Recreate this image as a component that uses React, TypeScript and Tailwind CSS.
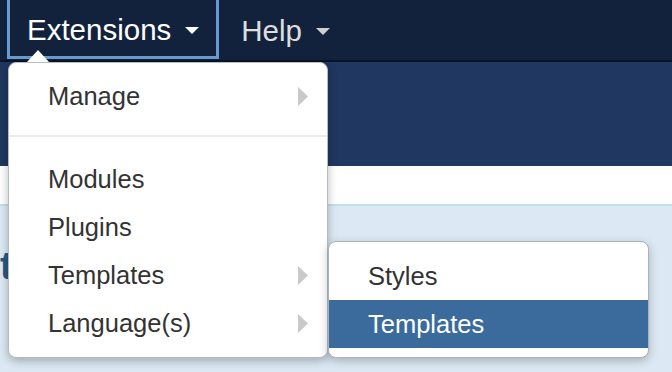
import React from "react";

const Arrow = () => (
  <svg width="10" height="19" viewBox="0 0 10 19" className="block">
    <polygon points="0,0 10,9.5 0,19" fill="#c9c9c9" />
  </svg>
);

const Caret = ({ color }: { color: string }) => (
  <svg width="14" height="7" viewBox="0 0 14 7" className="block">
    <polygon points="0,0 14,0 7,7" fill={color} />
  </svg>
);

function Item({ label, arrow, active }: { label: string; arrow?: boolean; active?: boolean }) {
  return (
    <div
      className={
        "h-[48px] flex items-center justify-between pl-[39px] pr-[19px] text-[25.5px] " +
        (active ? "bg-[#3b6b9d] text-white" : "text-[#333333]")
      }
    >
      <span>{label}</span>
      {arrow ? <Arrow /> : null}
    </div>
  );
}

export default function App() {
  return (
    <div
      className="relative w-[672px] h-[372px] overflow-hidden bg-[#dce9f4]"
      style={{ fontFamily: '"Helvetica Neue", Helvetica, "Liberation Sans", Arial, sans-serif' }}
    >
      {/* navbar */}
      <div className="h-[62px] bg-[#13223c] border-b-2 border-[#0b1424] flex items-start pl-[7px]">
        <div className="h-[59px] border-[3px] border-t-0 border-[#6a9bd0] flex items-center pt-[4px] pl-[17px] pr-[17px] gap-[14px] text-white text-[29.5px]">
          <span>Extensions</span>
          <Caret color="#ffffff" />
        </div>
        <div className="h-[59px] flex items-center pt-[4px] pl-[22px] gap-[14px] text-[#dedede] text-[29.5px]">
          <span>Help</span>
          <Caret color="#d0d0d0" />
        </div>
      </div>
      {/* header band */}
      <div className="h-[104px] bg-[#203761]" />
      <div className="h-[40px] bg-white border-b-2 border-[#c3e1ea]" />
      <div className="pt-[41px]">
        <div className="text-[38px] font-bold leading-none text-[#2a5880]">t</div>
      </div>

      {/* dropdown */}
      <div className="absolute left-[8px] top-[62px] w-[320px] bg-white border border-[#b4bcc4] rounded-[8px] shadow-[0_3px_10px_rgba(0,0,0,0.28)] pt-[9px] pb-[10px]">
        <div className="absolute left-[18px] top-[-13px] w-0 h-0 border-l-[11px] border-r-[11px] border-b-[12px] border-l-transparent border-r-transparent border-b-white" />
        <Item label="Manage" arrow />
        <div className="mt-[15px] mb-[18px] h-[2px] bg-[#ececec]" />
        <Item label="Modules" />
        <Item label="Plugins" />
        <Item label="Templates" arrow />
        <Item label="Language(s)" arrow />

        {/* submenu */}
        <div className="absolute left-[319px] top-[178px] w-[321px] bg-white border border-[#a9b1b9] rounded-[8px] shadow-[0_3px_10px_rgba(0,0,0,0.25)] pt-[10px] pb-[9px] overflow-hidden">
          <Item label="Styles" />
          <Item label="Templates" active />
        </div>
      </div>
    </div>
  );
}
